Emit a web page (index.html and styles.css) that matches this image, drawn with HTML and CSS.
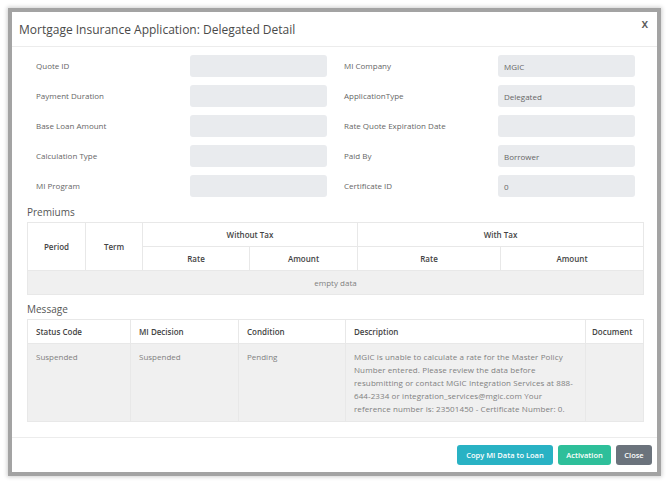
FILE: index.html
```html
<!DOCTYPE html>
<html lang="en">
<head>
  <meta charset="UTF-8" />
  <title>Mortgage Insurance Application</title>
  <link rel="stylesheet" href="styles.css">
</head>
<body>
  <div class="modal">
    <div class="modal-header">
      <h3>Mortgage Insurance Application: Delegated Detail</h3>
      <span class="close">x</span>
    </div>

    <div class="modal-body">
      <div class="form-grid">
        <label>Quote ID</label>
        <div class="field"></div>
        <label class="right">MI Company</label>
        <div class="field">MGIC</div>

        <label>Payment Duration</label>
        <div class="field"></div>
        <label class="right">ApplicationType</label>
        <div class="field">Delegated</div>

        <label>Base Loan Amount</label>
        <div class="field"></div>
        <label class="right">Rate Quote Expiration Date</label>
        <div class="field"></div>

        <label>Calculation Type</label>
        <div class="field"></div>
        <label class="right">Paid By</label>
        <div class="field">Borrower</div>

        <label>MI Program</label>
        <div class="field"></div>
        <label class="right">Certificate ID</label>
        <div class="field">0</div>
      </div>

      <h4>Premiums</h4>
      <table class="grid premiums">
        <colgroup>
          <col style="width:58px"><col style="width:57px">
          <col style="width:107px"><col style="width:108px">
          <col style="width:143px"><col style="width:143px">
        </colgroup>
        <tr>
          <th rowspan="2">Period</th>
          <th rowspan="2">Term</th>
          <th colspan="2">Without Tax</th>
          <th colspan="2">With Tax</th>
        </tr>
        <tr>
          <th>Rate</th>
          <th>Amount</th>
          <th>Rate</th>
          <th>Amount</th>
        </tr>
        <tr class="empty">
          <td colspan="6">empty data</td>
        </tr>
      </table>

      <h4>Message</h4>
      <table class="grid messages">
        <colgroup>
          <col style="width:103px"><col style="width:108px">
          <col style="width:107px"><col style="width:240px">
          <col style="width:58px">
        </colgroup>
        <tr>
          <th>Status Code</th>
          <th>MI Decision</th>
          <th>Condition</th>
          <th>Description</th>
          <th>Document</th>
        </tr>
        <tr>
          <td>Suspended</td>
          <td>Suspended</td>
          <td>Pending</td>
          <td class="desc">MGIC is unable to calculate a rate for the Master Policy Number entered. Please review the data before resubmitting or contact MGIC Integration Services at 888-644-2334 or integration_services@mgic.com Your reference number is: 23501450 - Certificate Number: 0.</td>
          <td></td>
        </tr>
      </table>
    </div>

    <div class="modal-footer">
      <button class="btn-copy">Copy MI Data to Loan</button>
      <button class="btn-activate">Activation</button>
      <button class="btn-close">Close</button>
    </div>
  </div>
</body>
</html>
```

FILE: styles.css
```css
* {
  box-sizing: border-box;
  margin: 0;
  padding: 0;
  font-family: "Open Sans", sans-serif;
}

body {
  background-color: #fff;
  padding: 12px 13px 12px 12px;
}

.modal {
  width: 645px;
  height: 460px;
  background: #fff;
  display: flex;
  flex-direction: column;
  box-shadow: 0 0 0 4px #a3a3a3, 0 0 4px 5px #d0d0d0;
}

.modal-header {
  height: 35px;
  display: flex;
  align-items: center;
  justify-content: space-between;
  padding: 0 9px 0 7px;
  border-bottom: 1px solid #ececec;
}

.modal-header h3 {
  font-size: 12px;
  font-weight: 500;
  color: #4a4a4a;
  padding-top: 1px;
}

.close {
  font-size: 12px;
  font-weight: 600;
  color: #5c5c5c;
  margin-top: -11px;
}

.modal-body {
  flex: 1;
  padding: 8px 14px 0 15px;
}

.form-grid {
  display: grid;
  grid-template-columns: 154px 137px 171px 137px;
  row-gap: 8px;
  padding-left: 9px;
}

.form-grid label {
  font-size: 8px;
  color: #666;
  display: flex;
  align-items: center;
  padding-bottom: 2px;
}

.form-grid label.right {
  padding-left: 17px;
}

.field {
  height: 22px;
  background-color: #e9ebee;
  border-radius: 3px;
  font-size: 8px;
  color: #666;
  display: flex;
  align-items: center;
  padding-left: 6px;
}

h4 {
  font-size: 10px;
  font-weight: 500;
  color: #555;
  height: 17px;
  margin-top: 8px;
  line-height: 14px;
}

.grid {
  width: 616px;
  border-collapse: collapse;
  table-layout: fixed;
}

.grid th,
.grid td {
  border: 1px solid #e8e8e8;
  font-size: 8px;
}

.grid th {
  font-weight: 600;
  color: #444;
  background: #fff;
}

.grid td {
  color: #808080;
  background: #f0f0f0;
}

.premiums th,
.premiums td {
  height: 24px;
  text-align: center;
}

.premiums + h4 {
  margin-top: 7px;
  height: 17px;
}

.messages th {
  height: 24px;
  text-align: left;
  padding-left: 8px;
}

.messages td {
  height: 77px;
  vertical-align: top;
  padding: 6px 8px;
  line-height: 13px;
}

.messages td.desc {
  letter-spacing: 0.1px;
}

.messages th:last-child {
  padding-left: 6px;
}

.modal-footer {
  height: 35px;
  border-top: 1px solid #ececec;
  display: flex;
  justify-content: flex-end;
  align-items: center;
  gap: 5px;
  padding-right: 5px;
}

.modal-footer button {
  height: 20px;
  border: none;
  border-radius: 3px;
  color: #fff;
  font-size: 7.5px;
  font-weight: 600;
  padding: 0 6px;
  cursor: pointer;
}

.btn-copy { background-color: #29b2c4; width: 96px; }
.btn-activate { background-color: #2ebf9a; width: 53px; }
.btn-close { background-color: #6b737c; width: 36px; }
```
